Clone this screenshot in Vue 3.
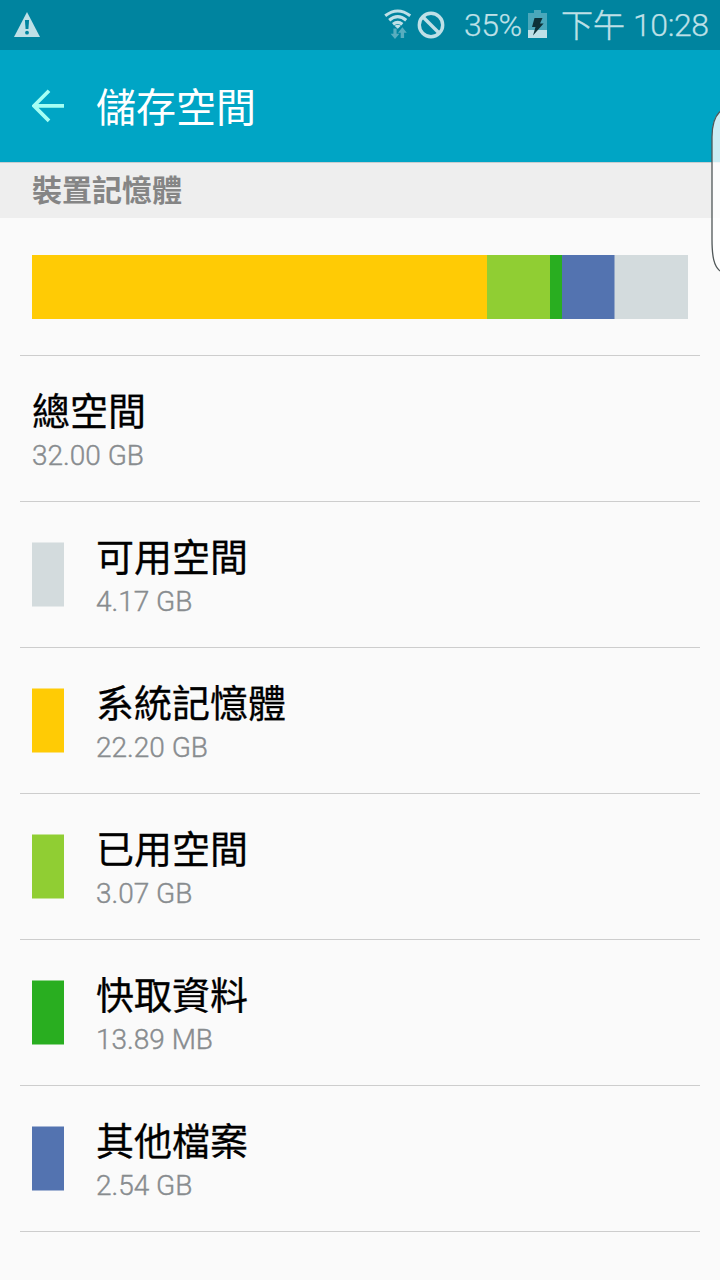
<script setup>
const segments = [
  { color: '#ffcb05', width: 455 },
  { color: '#90ce33', width: 63 },
  { color: '#29ae20', width: 12 },
  { color: '#5373b0', width: 52 },
  { color: '#93a7c7', width: 1 },
  { color: '#d3dbdd', width: 73 },
]
const rows = [
  { label: '總空間', value: '32.00 GB' },
  { label: '可用空間', value: '4.17 GB', color: '#d3dbdd' },
  { label: '系統記憶體', value: '22.20 GB', color: '#ffcb05' },
  { label: '已用空間', value: '3.07 GB', color: '#90ce33' },
  { label: '快取資料', value: '13.89 MB', color: '#29ae20' },
  { label: '其他檔案', value: '2.54 GB', color: '#5373b0' },
]
</script>

<template>
  <div class="screen">
    <div class="status">
      <svg class="warning" width="28" height="28" viewBox="0 0 28 28">
        <path d="M13 0 26 25H0Z" fill="#bfe0e7" />
        <path d="M10.900 8h4.200l-.7 9h-2.800z" fill="#00849f" />
        <circle cx="13" cy="20.700" r="1.900" fill="#00849f" />
      </svg>
      <div class="tray">
        <svg class="wifi" width="28" height="32" viewBox="0 0 28 32">
          <g fill="none" stroke="#bfe0e7" stroke-width="3.100">
            <path d="M1.200 7.800Q13.700 -1.800 26.200 7.800" />
            <path d="M5.200 12.200Q13.700 5.200 22.200 12.200" />
            <path d="M9 16.200Q13.700 12.400 18.400 16.200" />
          </g>
          <path d="M10.500 17.700q3.200-1.900 6.400 0l-3.200 3z" fill="#bfe0e7" />
          <path d="M9.400 20.500h3.200v5.200h2.800L11 31l-4.400-5.300h2.800z" fill="#58adbf" />
          <path d="M16.700 30h3.400v-5.200h2.700l-4.400-5.500-4.400 5.500h2.700z" fill="#58adbf" />
        </svg>
        <svg class="blocked" width="28" height="28" viewBox="0 0 28 28">
          <g fill="none" stroke="#bfe0e7" stroke-width="3.400">
            <circle cx="14" cy="14" r="11.700" />
            <path d="M5.700 5.700 22.300 22.300" />
          </g>
        </svg>
        <span class="percent">35%</span>
        <svg class="battery" width="19" height="28" viewBox="0 0 19 28">
          <path d="M6 0h7v3h6v17H0V3h6z" fill="#4aa8bb" />
          <path d="M0 20h19v8H0z" fill="#bfe0e7" />
          <path d="M6.500 8h8l-2.500 5.500h3.600L5 25.500l2.500-8.500H4z" fill="#0d3239" />
        </svg>
        <span class="ampm">下午</span>
        <span class="time">10:28</span>
      </div>
    </div>

    <header class="appbar">
      <svg class="back" width="32" height="34" viewBox="0 0 32 34">
        <path d="M17 1.700 2 16.800l15 15.100M2 16.800h30" fill="none" stroke="#a5fff4" stroke-width="3.700" />
      </svg>
      <h1>儲存空間</h1>
    </header>

    <h2>裝置記憶體</h2>

    <div class="usage">
      <div class="bar">
        <i v-for="s in segments" :key="s.color" :style="{ width: s.width + 'px', background: s.color }"></i>
      </div>
    </div>

    <ul>
      <li v-for="r in rows" :key="r.label">
        <i v-if="r.color" class="swatch" :style="{ background: r.color }"></i>
        <div class="text">
          <div class="label">{{ r.label }}</div>
          <div class="value">{{ r.value }}</div>
        </div>
      </li>
    </ul>

    <svg class="edge" width="9" height="162" viewBox="0 0 9 162">
      <path d="M9 .5C3 6 1 14 1 26L1 128C1 146 3 155 9 160" fill="#fff" fill-opacity=".8" stroke="#505758" stroke-width="1.300" />
    </svg>
  </div>
</template>

<style>
body { background: #fafafa; }
</style>

<style scoped>
.screen {
  position: relative;
  width: 720px;
  height: 1280px;
  overflow: hidden;
  background: #fafafa;
  font-family: Roboto, "Noto Sans CJK TC", sans-serif;
}
.status {
  display: flex;
  justify-content: space-between;
  height: 50px;
  background: #00849f;
  color: #bfe0e7;
  font-size: 32px;
  font-weight: 300;
  line-height: 50px;
}
.warning { margin: 12px 0 0 14px; }
.tray { display: flex; white-space: nowrap; }
.wifi { margin: 8px 5px 0 0; }
.blocked { margin: 11px 19px 0 0; }
.percent { width: 64px; letter-spacing: -.5px; -webkit-text-stroke: .25px #bfe0e7; }
.battery { margin: 10px 14px 0 0; }
.ampm { width: 72px; padding-top: 1px; -webkit-text-stroke: .5px #bfe0e7; }
.time { width: 87px; letter-spacing: -.4px; -webkit-text-stroke: .25px #bfe0e7; }
.appbar {
  display: flex;
  align-items: center;
  height: 112px;
  padding-left: 32px;
  background: #00a5c5;
}
.back { margin-right: 32px; }
h1 {
  margin: 0;
  padding-top: 6px;
  color: #fff;
  font-size: 40px;
  font-weight: 400;
  line-height: 60px;
}
h2 {
  box-sizing: border-box;
  height: 56px;
  margin: 0;
  padding-left: 32px;
  border-top: 1px solid #c8cdd0;
  background: #eee;
  color: #858585;
  font-size: 30px;
  font-weight: 700;
  line-height: 56px;
}
.usage {
  height: 100px;
  margin: 0 20px;
  padding: 37px 12px 0;
  border-bottom: 1px solid #cdcdcd;
}
.bar { display: flex; height: 64px; }
.bar i { flex: none; }
ul { margin: 0 20px; padding: 0; list-style: none; }
li {
  display: flex;
  box-sizing: border-box;
  align-items: center;
  gap: 32px;
  height: 146px;
  padding-left: 12px;
  border-bottom: 1px solid #cdcdcd;
}
.swatch {
  box-sizing: border-box;
  width: 32px;
  height: 65px;
  border: solid rgba(250, 250, 250, .5);
  border-width: 1px 0;
}
.text { padding-top: 4px; }
.label { color: #000; font-size: 38px; line-height: 50px; -webkit-text-stroke: .3px #000; }
.value { color: #888c8f; font-size: 28px; font-weight: 300; line-height: 38px; -webkit-text-stroke: .4px #888c8f; }
.edge { position: absolute; top: 111px; right: 0; }
</style>
